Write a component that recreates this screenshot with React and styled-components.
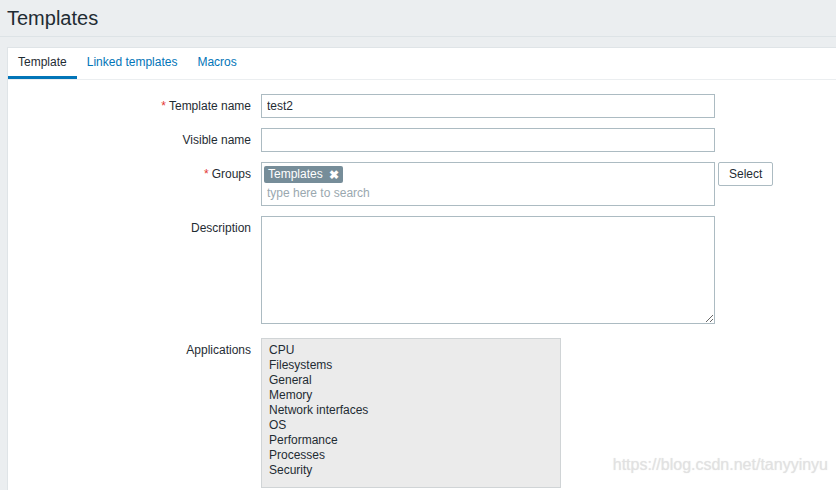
import React from 'react';
import styled, { createGlobalStyle } from 'styled-components';

const GlobalStyle = createGlobalStyle`
    html, body {
        margin: 0;
        padding: 0;
        background: #ebeef0;
        font-family: Arial, "Liberation Sans", sans-serif;
        font-size: 12px;
        color: #1f2c33;
    }
`;

const Page = styled.div`
    position: relative;
    width: 836px;
    height: 490px;
    overflow: hidden;
`;

const Header = styled.header`
    height: 37px;
    border-bottom: 1px solid #dde3e6;
    padding-left: 7px;
    box-sizing: border-box;

    h1 {
        margin: 0;
        font-size: 20px;
        font-weight: normal;
        line-height: 36px;
        color: #1f2c33;
    }
`;

const Panel = styled.div`
    margin: 10px 0 0 7px;
    background: #fff;
    border: 1px solid #dfe4e7;
    border-right: none;
    min-height: 460px;
`;

const Tabs = styled.nav`
    display: flex;
    border-bottom: 1px solid #ebeef0;
`;

const Tab = styled.a`
    display: block;
    padding: 0 10px;
    line-height: 28px;
    font-size: 12px;
    text-decoration: none;
    cursor: pointer;
    color: ${p => (p.$active ? '#1f2c33' : '#0275b8')};
    border-bottom: 3px solid ${p => (p.$active ? '#0275b8' : 'transparent')};
`;

const Form = styled.div`
    padding-top: 14px;
    display: grid;
    grid-template-columns: 243px auto;
    column-gap: 10px;
    row-gap: 10px;
    align-items: start;
`;

const Label = styled.label`
    text-align: right;
    line-height: 24px;
    color: #1f2c33;
    white-space: nowrap;
`;

const Required = styled.span`
    color: #e33734;
    margin-right: 3px;
`;

const Field = styled.div`
    display: flex;
    align-items: flex-start;
    gap: 3px;
    ${p => p.$extra && `margin-bottom: ${p.$extra}px;`}
`;

const TextInput = styled.input`
    box-sizing: border-box;
    width: 454px;
    height: 24px;
    margin: 0;
    padding: 0 5px;
    border: 1px solid #acbbc2;
    background: #fff;
    font-family: Arial, "Liberation Sans", sans-serif;
    font-size: 12px;
    color: #1f2c33;
    outline: none;
`;

const MultiSelect = styled.div`
    box-sizing: border-box;
    width: 454px;
    height: 44px;
    border: 1px solid #acbbc2;
    background: #fff;
    padding: 3px 2px 0 2px;
`;

const Chip = styled.span`
    display: inline-flex;
    align-items: center;
    gap: 6px;
    height: 17px;
    padding: 0 4px 0 4px;
    border-radius: 2px;
    background: #768d99;
    color: #fff;
    font-size: 12px;
    line-height: 17px;
`;

const ChipClose = styled.span`
    font-size: 12px;
    font-weight: bold;
    line-height: 1;
`;

const SearchInput = styled.input`
    display: block;
    box-sizing: border-box;
    width: 100%;
    height: 20px;
    margin: 0;
    padding: 0 3px;
    border: none;
    outline: none;
    font-family: Arial, "Liberation Sans", sans-serif;
    font-size: 12px;
    color: #1f2c33;

    &::placeholder {
        color: #9aa8af;
    }
`;

const Button = styled.button`
    box-sizing: border-box;
    height: 24px;
    padding: 0 10px;
    border: 1px solid #acbbc2;
    border-radius: 2px;
    background: #fff;
    font-family: Arial, "Liberation Sans", sans-serif;
    font-size: 12px;
    color: #1f2c33;
    cursor: pointer;
`;

const TextArea = styled.textarea`
    display: block;
    box-sizing: border-box;
    width: 454px;
    height: 108px;
    margin: 0;
    padding: 4px 5px;
    border: 1px solid #acbbc2;
    font-family: Arial, "Liberation Sans", sans-serif;
    font-size: 12px;
    color: #1f2c33;
    outline: none;
    resize: both;
`;

const ListBox = styled.ul`
    box-sizing: border-box;
    width: 300px;
    height: 150px;
    margin: 0;
    padding: 4px 7px;
    list-style: none;
    background: #ebebeb;
    border: 1px solid #d0d4d6;
    color: #1f2c33;

    li {
        line-height: 15px;
    }
`;

const Watermark = styled.div`
    position: absolute;
    right: 8px;
    bottom: 16px;
    font-family: Arial, "Liberation Sans", sans-serif;
    font-size: 16px;
    color: rgba(225, 225, 225, 0.85);
    text-shadow: 0 0 1px rgba(170, 170, 170, 0.35);
    pointer-events: none;
`;

const applications = [
    'CPU',
    'Filesystems',
    'General',
    'Memory',
    'Network interfaces',
    'OS',
    'Performance',
    'Processes',
    'Security',
];

export default function App() {
    return (
        <Page>
            <GlobalStyle />
            <Header>
                <h1>Templates</h1>
            </Header>
            <Panel>
                <Tabs>
                    <Tab $active>Template</Tab>
                    <Tab>Linked templates</Tab>
                    <Tab>Macros</Tab>
                </Tabs>
                <Form>
                    <Label><Required>*</Required>Template name</Label>
                    <Field>
                        <TextInput defaultValue="test2" />
                    </Field>

                    <Label>Visible name</Label>
                    <Field>
                        <TextInput />
                    </Field>

                    <Label><Required>*</Required>Groups</Label>
                    <Field>
                        <MultiSelect>
                            <Chip>
                                Templates
                                <ChipClose>✖</ChipClose>
                            </Chip>
                            <SearchInput placeholder="type here to search" />
                        </MultiSelect>
                        <Button>Select</Button>
                    </Field>

                    <Label>Description</Label>
                    <Field $extra={4}>
                        <TextArea />
                    </Field>

                    <Label>Applications</Label>
                    <Field>
                        <ListBox>
                            {applications.map(a => (
                                <li key={a}>{a}</li>
                            ))}
                        </ListBox>
                    </Field>
                </Form>
            </Panel>
            <Watermark>https://blog.csdn.net/tanyyinyu</Watermark>
        </Page>
    );
}
